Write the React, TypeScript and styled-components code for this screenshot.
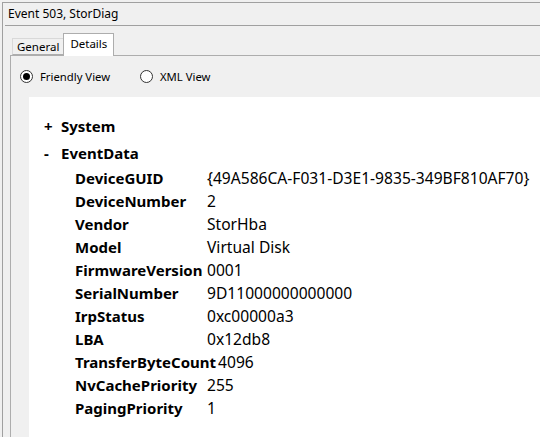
import React from "react";
import styled, { createGlobalStyle } from "styled-components";

const Global = createGlobalStyle`
  html, body { margin: 0; padding: 0; background: #f0f0f0; }
  body { font-family: "Noto Sans", "Segoe UI", sans-serif; color: #000; }
  * { box-sizing: border-box; }
`;

const Window = styled.div`
  margin: 2px 0 0 2px;
  height: calc(100vh - 2px);
  border-top: 1px solid #a0a0a0;
  border-left: 1px solid #a0a0a0;
  display: flex;
  flex-direction: column;
  overflow: hidden;
`;

const TitleBar = styled.div`
  margin-left: 2px;
  height: 23px;
  padding-left: 3px;
  font-size: 12px;
  line-height: 22px;
  border-bottom: 1px solid #a0a0a0;
  white-space: nowrap;
`;

const TabArea = styled.div`
  flex: 1;
  display: flex;
  flex-direction: column;
  margin: 7px 0 0 7px;
  min-height: 0;
`;

const TabStrip = styled.div`
  display: flex;
  align-items: flex-end;
  height: 22px;
  padding-left: 2px;
  position: relative;
  z-index: 1;
`;

const Tab = styled.div<{ $active?: boolean }>`
  font-size: 11.5px;
  white-space: nowrap;
  height: ${(p) => (p.$active ? "23px" : "17px")};
  line-height: ${(p) => (p.$active ? "20px" : "16px")};
  margin-bottom: ${(p) => (p.$active ? "-1px" : "0")};
  padding: 0 ${(p) => (p.$active ? "6px" : "4px")};
  background: ${(p) => (p.$active ? "#ffffff" : "#f0f0f0")};
  border: 1px solid ${(p) => (p.$active ? "#adadad" : "#d9d9d9")};
  border-bottom: ${(p) => (p.$active ? "none" : "1px solid #adadad")};
  ${(p) => (!p.$active ? "border-right: none;" : "")}
`;

const TabPanel = styled.div`
  flex: 1;
  border-top: 1px solid #adadad;
  border-left: 1px solid #adadad;
  display: flex;
  flex-direction: column;
  min-height: 0;
`;

const RadioRow = styled.div`
  height: 41px;
  display: flex;
  align-items: center;
  padding-left: 9px;
`;

const RadioItem = styled.label<{ $width?: number }>`
  display: flex;
  align-items: center;
  gap: 7px;
  font-size: 11.3px;
  white-space: nowrap;
  width: ${(p) => (p.$width ? `${p.$width}px` : "auto")};
`;

const RadioCircle = styled.span<{ $checked?: boolean }>`
  width: 13px;
  height: 13px;
  border-radius: 50%;
  border: 1px solid #333;
  background: #fff;
  display: flex;
  align-items: center;
  justify-content: center;
  &::after {
    content: "";
    width: 7px;
    height: 7px;
    border-radius: 50%;
    background: #000;
    display: ${(p) => (p.$checked ? "block" : "none")};
  }
`;

const Content = styled.div`
  flex: 1;
  margin-left: 18px;
  background: #fff;
  padding: 16px 0 0 15px;
  font-size: 15px;
`;

const NodeHeader = styled.div`
  display: flex;
  height: 27px;
  line-height: 27px;
  font-weight: 700;
`;

const Expander = styled.span`
  width: 17px;
`;

const Children = styled.div`
  padding-left: 31px;
`;

const Row = styled.div`
  display: flex;
  align-items: baseline;
  height: 23px;
  line-height: 23px;
  white-space: nowrap;
`;

const Name = styled.span`
  font-weight: 700;
  min-width: 132px;
  padding-right: 2px;
`;

const Value = styled.span`
  font-weight: 400;
  font-size: 15.6px;
`;

const rows: [string, string][] = [
  ["DeviceGUID", "{49A586CA-F031-D3E1-9835-349BF810AF70}"],
  ["DeviceNumber", "2"],
  ["Vendor", "StorHba"],
  ["Model", "Virtual Disk"],
  ["FirmwareVersion", "0001"],
  ["SerialNumber", "9D11000000000000"],
  ["IrpStatus", "0xc00000a3"],
  ["LBA", "0x12db8"],
  ["TransferByteCount", "4096"],
  ["NvCachePriority", "255"],
  ["PagingPriority", "1"],
];

export default function App() {
  return (
    <>
      <Global />
      <Window>
        <TitleBar>Event 503, StorDiag</TitleBar>
        <TabArea>
          <TabStrip>
            <Tab>General</Tab>
            <Tab $active>Details</Tab>
          </TabStrip>
          <TabPanel>
            <RadioRow>
              <RadioItem $width={120}>
                <RadioCircle $checked />
                Friendly View
              </RadioItem>
              <RadioItem>
                <RadioCircle />
                XML View
              </RadioItem>
            </RadioRow>
            <Content>
              <NodeHeader>
                <Expander>+</Expander>System
              </NodeHeader>
              <NodeHeader>
                <Expander>-</Expander>EventData
              </NodeHeader>
              <Children>
                {rows.map(([n, v]) => (
                  <Row key={n}>
                    <Name>{n}</Name>
                    <Value>{v}</Value>
                  </Row>
                ))}
              </Children>
            </Content>
          </TabPanel>
        </TabArea>
      </Window>
    </>
  );
}
